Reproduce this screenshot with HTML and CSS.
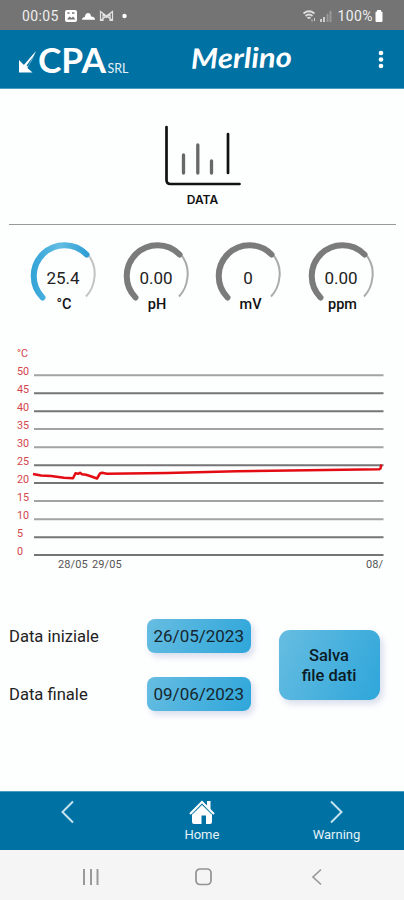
FILE: index.html
```html
<!DOCTYPE html>
<html lang="it">
<head>
<meta charset="utf-8">
<title>Merlino</title>
<link rel="stylesheet" href="styles.css">
</head>
<body>
<svg class="defs" width="0" height="0">
  <defs>
    <linearGradient id="blue" x1="0" y1="0" x2="1" y2="0">
      <stop offset="0" stop-color="#35a5d8"/><stop offset=".5" stop-color="#63bde2"/><stop offset="1" stop-color="#2f9fd5"/>
    </linearGradient>
  </defs>
</svg>
<div class="status">
  <span class="clock">00:05</span>
  <svg class="status-left" width="66" height="14" viewBox="0 0 66 14">
    <rect x="0" y="1" width="12" height="12" rx="2" fill="#fff"/>
    <path d="M2 10.500l2.500-3 2 1.500 1.500-1.500 2.500 3z" fill="#747474"/><path d="M2.500 4h2M7 4h2.500" stroke="#747474" stroke-width="1.500"/>
    <path d="M17 10.800c0-2 1.500-2.900 2.800-2.900.6-2.800 1.700-3.900 3.100-3.900 1.800 0 2.900 1.200 3.200 3.400 2.700.2 4 1.400 4 3.400z" fill="#fff"/>
    <path d="M35.500 2.500v9h2.500v-6l3.500 3 3.500-3v6h2.500v-9l-6 4.500zM36 11l11-8M36 3l11 8" fill="none" stroke="#e2e2e2" stroke-width="1.200"/>
    <circle cx="59.500" cy="7" r="2.200" fill="#fff"/>
  </svg>
  <svg class="status-right" width="32" height="14" viewBox="0 0 32 14">
    <path d="M1.500 4.500q5.500-4.500 11 0M3.500 7q3.500-3 7 0M5.500 9.300q1.500-1.500 3 0" fill="none" stroke="#ddd" stroke-width="1.700"/>
    <path d="M10 10.500v2M12.500 9v3" stroke="#ccc"/>
    <path d="M19 10v3M22 8v5" stroke="#ccc" stroke-width="2"/><path d="M25.500 5v8M28.500 2v11" stroke="#999" stroke-width="2"/>
  </svg>
  <span class="percent">100%</span>
  <svg width="10" height="14" viewBox="0 0 10 14"><path d="M3 1h4v1.500h.5q1 0 1 1V12q0 1-1 1h-5q-1 0-1-1V3.500q0-1 1-1H3z" fill="#fff"/></svg>
</div>
<header class="header">
  <svg class="brand" width="113" height="40" viewBox="0 0 113 40">
    <path d="M1 21v12.500h13.500l-4.500-4L6 26z" fill="#fff"/>
    <path d="M4.500 27.500L18 12Q14.500 21 9 29.500z" fill="#fff"/><path d="M8.500 26.500L16 16.500 10 27.500z" fill="#0071a3"/>
    <text class="brand-main" x="20" y="33.500" textLength="68" lengthAdjust="spacingAndGlyphs">CPA</text>
    <text class="brand-sub" x="89.500" y="33.500" textLength="21" lengthAdjust="spacingAndGlyphs">SRL</text>
  </svg>
  <svg class="title" width="106" height="40" viewBox="0 0 106 40">
    <text class="title-text" x="2" y="29" textLength="101" lengthAdjust="spacingAndGlyphs" transform="rotate(-1 50 25)">Merlino</text>
  </svg>
  <svg class="more" width="8" height="20" viewBox="0 0 8 20" fill="#fff"><circle cx="4" cy="4" r="2.300"/><circle cx="4" cy="10.500" r="2.300"/><circle cx="4" cy="17" r="2.300"/></svg>
</header>
<main class="main">
  <section class="data">
    <svg width="78" height="62" viewBox="0 0 78 62" fill="none" stroke-linecap="round">
      <path d="M2.500 2V55q0 4 4 4H75.500" stroke="#111" stroke-width="2.700"/>
      <path d="M19.500 30v18M33.800 20v28M47.500 36v12" stroke="#686868" stroke-width="3.300"/>
      <path d="M64 9v39" stroke="#111" stroke-width="2.700"/>
    </svg>
    <span class="data-label">DATA</span>
  </section>
  <section class="gauges">
    <svg class="gauge hot" viewBox="0 0 92 76"><path class="rest" d="M70.500 14Q79 24 77.500 37Q76.300 49 69 56.500"/><path class="arc" d="M25.500 57.500A30.500 30.500 0 1 1 69.500 14.500"/><text class="num" x="46" y="43.500">25.4</text><text class="unit" x="47" y="69">°C</text></svg>
    <svg class="gauge" viewBox="0 0 92 76"><path class="rest" d="M70.500 14Q79 24 77.500 37Q76.300 49 69 56.500"/><path class="arc" d="M25.500 57.500A30.500 30.500 0 1 1 69.500 14.500"/><text class="num" x="46" y="43.500">0.00</text><text class="unit" x="47" y="69">pH</text></svg>
    <svg class="gauge" viewBox="0 0 92 76"><path class="rest" d="M70.500 14Q79 24 77.500 37Q76.300 49 69 56.500"/><path class="arc" d="M25.500 57.500A30.500 30.500 0 1 1 69.500 14.500"/><text class="num" x="46" y="43.500">0</text><text class="unit" x="48.500" y="69">mV</text></svg>
    <svg class="gauge" viewBox="0 0 92 76"><path class="rest" d="M70.500 14Q79 24 77.500 37Q76.300 49 69 56.500"/><path class="arc" d="M25.500 57.500A30.500 30.500 0 1 1 69.500 14.500"/><text class="num" x="46" y="43.500">0.00</text><text class="unit" x="47.500" y="69">ppm</text></svg>
  </section>
  <svg class="chart" width="404" height="240" viewBox="0 0 404 240">
    <g fill="none" stroke-width="2">
      <path stroke="#a3a3a3" d="M34 35.300H383.500M34 89H383.500M34 107.300H383.500M34 161H383.500M34 179.300H383.500"/>
      <path stroke="#757577" d="M34 53.300H383.500M34 71.200H383.500M34 125.300H383.500M34 143H383.500M34 197.300H383.500M34 215H383.500"/>
    </g>
    <g class="axis">
      <text x="17" y="17">°C</text><text x="17" y="35">50</text><text x="17" y="53">45</text><text x="17" y="71">40</text><text x="17" y="89">35</text><text x="17" y="107">30</text><text x="17" y="125">25</text><text x="17" y="143">20</text><text x="17" y="161">15</text><text x="17" y="179">10</text><text x="17" y="197">5</text><text x="17" y="215">0</text>
    </g>
    <path class="series" d="M33 134l8 1.500 10 .5 13 1.800 9 .5 2.500-5 2.500.5 2-1 2 1.500 4 .5 4 1.200 7 2.500 3-5 2-.8 5 1 60-.7 70-1.700 142-2 1.500-.8.800-4"/>
    <g class="dates"><text x="58" y="228.300">28/05</text><text x="92" y="228.300">29/05</text><text x="366" y="228.300">08/</text></g>
  </svg>
  <section class="form">
    <div class="fields">
      <span class="name">Data iniziale</span><button class="btn">26/05/2023</button>
      <span class="name">Data finale</span><button class="btn">09/06/2023</button>
    </div>
    <button class="btn save">Salva<br>file dati</button>
  </section>
</main>
<nav class="nav">
  <div class="item"><svg width="16" height="26" viewBox="0 0 16 26"><path d="M14 2.500L3.500 13l10.500 10.500" fill="none" stroke="#c5e3ef" stroke-width="2"/></svg></div>
  <div class="item"><svg width="28" height="26" viewBox="0 0 28 26"><path d="M19 2h3.500v9l-3.500-3.500zM4 15L14 5.500l10 9.500v8q0 2-2 2h-4v-8.500h-4.500V25H6q-2 0-2-2z" fill="#fff"/><path d="M2 15L14 3l12 12" fill="none" stroke="#fff" stroke-width="2"/><path d="M4 15.500L14 5.500l10 10" fill="none" stroke="#0071a3" stroke-width=".8"/></svg><span>Home</span></div>
  <div class="item"><svg width="16" height="26" viewBox="0 0 16 26"><path d="M3 2.500L13.500 13 3 23.500" fill="none" stroke="#c5e3ef" stroke-width="2"/></svg><span>Warning</span></div>
</nav>
<footer class="system">
  <svg width="20" height="20" viewBox="0 0 20 20"><path d="M4 2v16M11 2v16M17.500 2v16" stroke="#999" stroke-width="2"/></svg>
  <svg width="20" height="20" viewBox="0 0 20 20"><rect x="2" y="2" width="15" height="15.500" rx="4" fill="none" stroke="#929292" stroke-width="1.700"/></svg>
  <svg width="20" height="20" viewBox="0 0 20 20"><path d="M14 2.500L6 10l8 7.500" fill="none" stroke="#999" stroke-width="1.700"/></svg>
</footer>
</body>
</html>
```
FILE: styles.css
```css
* { box-sizing: border-box; }
body { margin: 0; width: 404px; height: 900px; overflow: hidden; display: flex; flex-direction: column; background: #fdfefe; font-family: Roboto, sans-serif; color: #222; }
svg { display: block; flex: none; }
.defs { height: 0; }
.status { height: 30px; flex: none; background: #747474; color: #eee; display: flex; align-items: center; padding: 1px 20px 0 22px; font-size: 14px; }
.clock { width: 43px; letter-spacing: .4px; }
.status-right { margin-left: auto; margin-right: 4px; }
.percent { margin-right: 1px; letter-spacing: .4px; }
.header { height: 59px; flex: none; background: #0071a3; border-bottom: 1px solid #4a9dc0; display: flex; align-items: center; padding: 0 19px 0 18px; }
.brand-main { font: 700 35px Lato, sans-serif; fill: #fff; }
.brand-sub { font: 400 13px Lato, sans-serif; fill: #e4f2f8; }
.title { margin-left: 58px; }
.title-text { font: italic 700 28px Lato, sans-serif; fill: #fff; }
.more { margin-left: auto; }
.main { flex: 1; display: flex; flex-direction: column; }
.data { height: 136px; margin: 0 8px 0 9px; padding: 36px 0 0; border-bottom: 1px solid #999; display: flex; flex-direction: column; align-items: center; }
.data-label { font: 600 12px/16px Inter, sans-serif; color: #111; margin-top: 5px; }
.gauges { display: grid; grid-template-columns: repeat(4, 92px); column-gap: .7px; padding: 15px 0 0 17px; }
.gauge { width: 92px; height: 76px; fill: none; }
.rest { stroke: #aaa; stroke-width: 2; }
.arc { stroke: #7b7b7b; stroke-width: 6; stroke-linecap: round; }
.hot .arc { stroke: url(#blue); }
.hot .rest { stroke: #c3c3c3; }
.num { font-size: 17px; text-anchor: middle; fill: #222; }
.unit { font-size: 14.5px; font-weight: 500; text-anchor: middle; fill: #111; }
.chart { margin-top: 24px; }
.axis { font-size: 10.8px; fill: #d3454d; }
.dates { font-size: 11px; letter-spacing: .1px; fill: #555; }
.series { fill: none; stroke: #e30c13; stroke-width: 2.500px; stroke-linejoin: round; }
.form { display: flex; align-items: flex-start; gap: 28px; padding: 39px 24px 0 9px; }
.fields { display: grid; grid-template-columns: 138px 103.5px; row-gap: 24px; align-items: center; }
.name { font-size: 16.6px; }
.btn { height: 34px; padding: 0; border: 0; border-radius: 8px; font: 17px Roboto, sans-serif; color: #15262e; background: linear-gradient(115deg, #67bde1, #2ea6da); box-shadow: 3px 4px 6px #d9deed; }
.save { width: 101px; height: 70px; margin-top: 11px; border-radius: 11px; padding-top: 1px; font-size: 16.500px; font-weight: 500; line-height: 19.700px; color: #0b1c25; }
.nav { height: 59px; flex: none; background: #0071a3; border-top: 1px solid #4a9dc0; display: grid; grid-template-columns: repeat(3, 134.6px); }
.item { display: flex; flex-direction: column; align-items: center; padding-top: 7px; color: #e3f2f8; font-size: 13px; line-height: 15px; }
.item span { margin-top: 2px; }
.system { height: 50px; flex: none; background: #f5f5f5; display: flex; justify-content: space-between; align-items: center; padding: 3px 77px 0 80px; }
```
